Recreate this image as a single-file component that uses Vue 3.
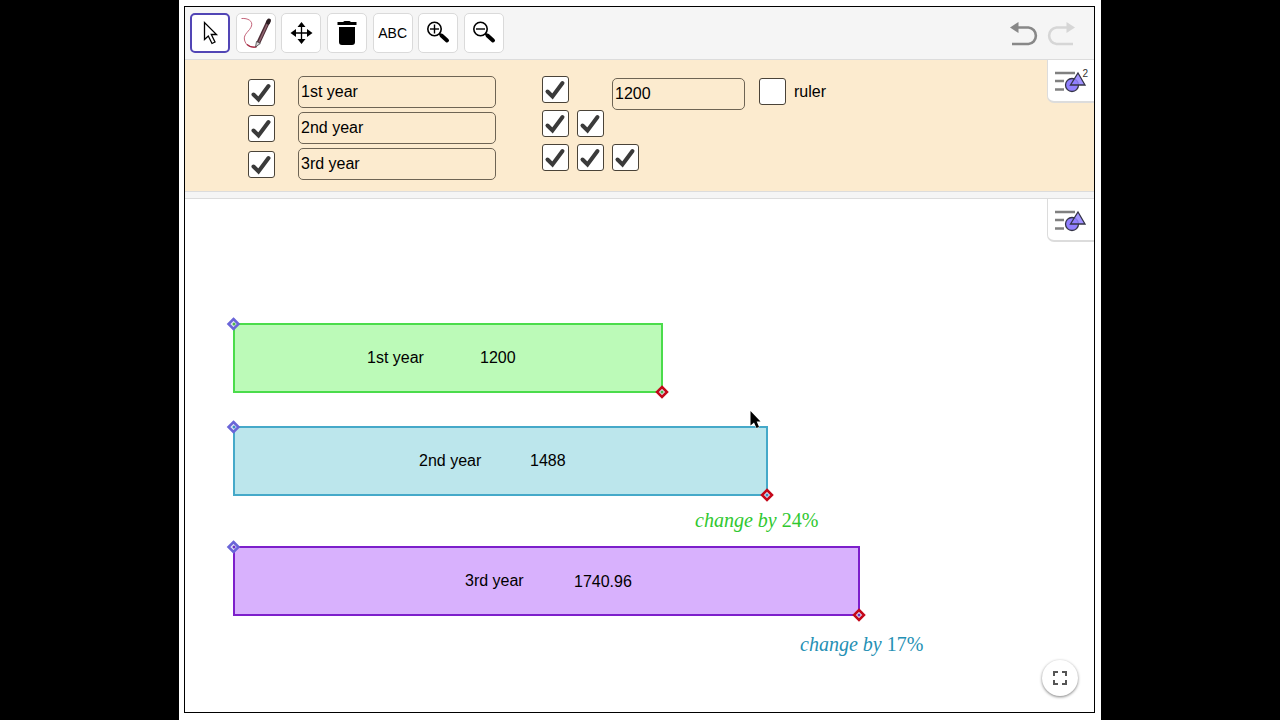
<script setup>
    import {ref, computed} from 'vue'

    const activeTool = ref('move')
    const tools = [
        {id: 'move', label: 'Move'},
        {id: 'pen', label: 'Pen'},
        {id: 'pan', label: 'Move view'},
        {id: 'delete', label: 'Delete'},
        {id: 'text', label: 'Text'},
        {id: 'zoomIn', label: 'Zoom in'},
        {id: 'zoomOut', label: 'Zoom out'}
    ]

    const years = ref([
        {name: '1st year', shown: true},
        {name: '2nd year', shown: true},
        {name: '3rd year', shown: true}
    ])

    const marks = ref([
        {row: 1, col: 1, on: true},
        {row: 2, col: 1, on: true},
        {row: 2, col: 2, on: true},
        {row: 3, col: 1, on: true},
        {row: 3, col: 2, on: true},
        {row: 3, col: 3, on: true}
    ])

    const amount = ref('1200')
    const ruler = ref(false)

    const bars = computed(() => [
        {kind: 'green', x: 49, y: 125, w: 428, h: 68, value: amount.value, nameX: 182, nameY: 164, valueX: 295, valueY: 164},
        {kind: 'blue', x: 49, y: 228, w: 533, h: 68, value: '1488', nameX: 234, nameY: 267, valueX: 345, valueY: 267},
        {kind: 'purple', x: 49, y: 348, w: 625, h: 68, value: '1740.96', nameX: 280, nameY: 387, valueX: 389, valueY: 388}
    ])

    const changes = [
        {kind: 'green', x: 510, y: 328, percent: '24%'},
        {kind: 'blue', x: 615, y: 452, percent: '17%'}
    ]
</script>

<template>
    <div class="screen">
        <svg class="defs" width="0" height="0" aria-hidden="true">
            <symbol id="check" viewBox="0 0 27 27">
                <path d="M5.500 15.500L10.500 20.500L20.500 7" fill="none" stroke="#3a3a3a" stroke-width="4" stroke-linecap="round" stroke-linejoin="miter"/>
            </symbol>
            <symbol id="style" viewBox="0 0 34 26">
                <path d="M1 5h20M1 13h9M1 21.500h9" stroke="#808080" stroke-width="2.400"/>
                <circle cx="18" cy="17" r="6.500" fill="#9180ff" stroke="#343447" stroke-width="1.300"/>
                <path d="M24 5L31 17H16.500Z" fill="#9180ff" fill-opacity=".85" stroke="#343447" stroke-width="1.300"/>
            </symbol>
        </svg>

        <div class="sheet">
            <main class="applet">
                <header class="toolbar">
                    <nav class="tools">
                        <button
                            v-for="tool in tools"
                            :key="tool.id"
                            type="button"
                            class="tool"
                            :class="{active: activeTool === tool.id}"
                            :aria-label="tool.label"
                            @click="activeTool = tool.id"
                        >
                            <span v-if="tool.id === 'text'">ABC</span>
                            <svg v-else width="32" height="32" viewBox="0 0 32 32" aria-hidden="true">
                                <path v-if="tool.id === 'move'" d="M10.500 5.500V22.500L14.300 19L18 26.500L21 25L17.300 17.500H22.500Z" fill="#fff" stroke="#000" stroke-width="1.300"/>
                                <g v-if="tool.id === 'pen'" fill="none">
                                    <path d="M1.500 1.500C8 1 13 4 11.500 9C10 14 3 17 4.500 23C6 29 11 31 16.500 30" stroke="#c4647a" stroke-width="1"/>
                                    <path d="M7 27.500Q12 31.500 17 29.500" stroke="#a3263e" stroke-width="1.300"/>
                                    <path d="M28.500 4L18.500 25.500" stroke="#4b2c35" stroke-width="4"/>
                                    <path d="M28 5.500L19 25" stroke="#916571" stroke-width="1.500"/>
                                    <path d="M29 3.500L28 5.500" stroke="#2b1d22" stroke-width="4" stroke-linecap="round"/>
                                    <path d="M16.500 24.500L15.500 30L20.300 26.500Z" fill="#dcd3d6" stroke="#444" stroke-width=".8"/>
                                </g>
                                <g v-if="tool.id === 'pan'">
                                    <path d="M16.500 8V24M8 16H25" stroke="#000" stroke-width="1.300"/>
                                    <path d="M16.500 5L20.500 10H12.500ZM16.500 27L20.500 22H12.500ZM5.500 16L11 12V20ZM27.500 16L22 12V20Z"/>
                                </g>
                                <path v-if="tool.id === 'delete'" d="M6.500 5H12L13.500 4H18.500L20 5H25.500V8H6.500ZM8 10H24V25Q24 28 21 28H11Q8 28 8 25Z"/>
                                <g v-if="tool.id === 'zoomIn' || tool.id === 'zoomOut'" fill="none" stroke="#000">
                                    <circle cx="12.500" cy="12" r="6.700" stroke-width="1.600"/>
                                    <path d="M8 12H17" stroke-width="1.400"/>
                                    <path v-if="tool.id === 'zoomIn'" d="M12.500 7.500V16.500" stroke-width="1.400"/>
                                    <path d="M17.300 16.500L20 19" stroke-width="2"/>
                                    <path d="M19.500 18.500L25 23.500" stroke-width="4" stroke-linecap="round"/>
                                </g>
                            </svg>
                        </button>
                    </nav>
                    <div class="history">
                        <button type="button" class="undo" aria-label="Undo">
                            <svg width="30" height="26" viewBox="0 0 30 26" aria-hidden="true">
                                <path d="M8 7.500H19.500A8.300 8.300 0 0 1 19.500 24H3" fill="none" stroke="currentColor" stroke-width="2.600"/>
                                <path d="M1 7.500L9.500 2V13Z" fill="currentColor"/>
                            </svg>
                        </button>
                        <button type="button" class="redo" aria-label="Redo">
                            <svg width="30" height="26" viewBox="0 0 30 26" aria-hidden="true">
                                <path d="M22 7.500H10.500A8.300 8.300 0 0 0 10.500 24H27" fill="none" stroke="currentColor" stroke-width="2.600"/>
                                <path d="M29 7.500L20.500 2V13Z" fill="currentColor"/>
                            </svg>
                        </button>
                    </div>
                </header>

                <section class="controls">
                    <div class="names">
                        <template v-for="(year, i) in years" :key="i">
                            <span class="box">
                                <input v-model="year.shown" type="checkbox" :aria-label="'Show bar ' + (i + 1)">
                                <svg v-if="year.shown" width="27" height="27" aria-hidden="true"><use href="#check"/></svg>
                            </span>
                            <input v-model="year.name" class="field" type="text" :aria-label="'Name of bar ' + (i + 1)">
                        </template>
                    </div>

                    <div class="marks">
                        <span v-for="(mark, i) in marks" :key="i" class="box" :class="['row' + mark.row, 'col' + mark.col]">
                            <input v-model="mark.on" type="checkbox" :aria-label="'Label ' + (i + 1)">
                            <svg v-if="mark.on" width="27" height="27" aria-hidden="true"><use href="#check"/></svg>
                        </span>
                        <input v-model="amount" class="field amount" type="text" aria-label="Amount">
                        <label class="ruler">
                            <span class="box">
                                <input v-model="ruler" type="checkbox">
                                <svg v-if="ruler" width="27" height="27" aria-hidden="true"><use href="#check"/></svg>
                            </span>
                            ruler
                        </label>
                    </div>

                    <button type="button" class="style-button" aria-label="Style bar of view 2">
                        <svg width="34" height="26" aria-hidden="true"><use href="#style"/></svg>
                        <span class="view-number">2</span>
                    </button>
                </section>

                <div class="divider"></div>

                <section class="canvas">
                    <svg class="drawing">
                        <g v-for="(bar, i) in bars" :key="bar.kind" :class="bar.kind">
                            <template v-if="years[i].shown">
                                <rect class="bar" :x="bar.x" :y="bar.y" :width="bar.w" :height="bar.h"/>
                                <text :x="bar.nameX" :y="bar.nameY">{{ years[i].name }}</text>
                                <text :x="bar.valueX" :y="bar.valueY">{{ bar.value }}</text>
                                <g :transform="`translate(${bar.x} ${bar.y})`">
                                    <path class="handle start" d="M-.5 -5L4.500 0L-.5 5L-5.500 0Z"/>
                                    <circle class="dot" cx="0" cy="0" r="1.500"/>
                                </g>
                                <g :transform="`translate(${bar.x + bar.w} ${bar.y + bar.h})`">
                                    <path class="handle end" d="M0 -5L5 0L0 5L-5 0Z"/>
                                    <circle class="dot" cx="0" cy="0" r="1.500"/>
                                </g>
                            </template>
                        </g>
                        <text v-for="change in changes" :key="change.kind" class="change" :class="change.kind" :x="change.x" :y="change.y">change by <tspan class="percent">{{ change.percent }}</tspan></text>
                        <path class="pointer" d="M565.500 212V226.500L569 223.500L571.500 229L574 228L571.700 222.500H575.500Z"/>
                    </svg>

                    <button type="button" class="style-button" aria-label="Style bar">
                        <svg width="34" height="26" aria-hidden="true"><use href="#style"/></svg>
                    </button>
                    <button type="button" class="fullscreen" aria-label="Full screen">
                        <svg width="16" height="16" viewBox="0 0 16 16" aria-hidden="true">
                            <path d="M2 6V2H6M10 2H14V6M14 10V14H10M6 14H2V10" fill="none" stroke="#555" stroke-width="2"/>
                        </svg>
                    </button>
                </section>
            </main>
        </div>
    </div>
</template>

<style>
    body{
        background: #000;
    }
</style>

<style scoped>
    .screen{
        display: flex;
        min-height: 100vh;
        box-sizing: border-box;
        padding: 0 179px;
        background: #000;
        color: #000;
        font-family: "Liberation Sans", Arial, sans-serif;
        font-size: 16px;
    }

    .defs{
        position: absolute;
    }

    .sheet{
        display: flex;
        flex: 1;
        min-width: 0;
        padding: 6px 6px 7px 5px;
        background: #fff;
    }

    .applet{
        display: flex;
        flex-direction: column;
        flex: 1;
        min-width: 0;
        border: 1px solid #000;
    }

    button{
        padding: 0;
        border: 0;
        background: none;
        color: inherit;
        font: inherit;
        cursor: pointer;
    }

    .toolbar{
        display: flex;
        align-items: center;
        justify-content: space-between;
        padding: 6px 18px 6px 5px;
        border-bottom: 1px solid #dcdcdc;
        background: #f5f5f5;
    }

    .tools{
        display: flex;
        justify-content: space-between;
        width: 314px;
    }

    .tool{
        display: flex;
        align-items: center;
        justify-content: center;
        width: 40px;
        height: 40px;
        border: 1px solid #dadada;
        border-radius: 5px;
        background: #fff;
        font-size: 14px;
    }

    .tool.active{
        border: 2px solid #5145b5;
    }

    .history{
        display: flex;
        gap: 7px;
    }

    .history button{
        display: flex;
    }

    .undo{
        color: #888;
    }

    .redo{
        color: #d6d6d6;
    }

    .controls{
        position: relative;
        display: flex;
        gap: 46px;
        padding: 16px 0 11px 63px;
        background: #fcebcf;
    }

    .names{
        display: grid;
        grid-template-columns: 27px 198px;
        grid-auto-rows: 32px;
        align-items: center;
        gap: 4px 23px;
    }

    .marks{
        display: grid;
        grid-template-columns: 27px 27px 133px auto;
        grid-template-rows: 27px 27px 27px;
        gap: 7px 8px;
    }

    .box{
        display: grid;
        width: 27px;
        height: 27px;
    }

    .box input, .box svg{
        grid-area: 1 / 1;
    }

    .box input{
        appearance: none;
        width: 27px;
        height: 27px;
        margin: 0;
        border: 1px solid #4a4338;
        border-radius: 3px;
        background: #fff;
    }

    .box svg{
        position: relative;
        pointer-events: none;
    }

    .row1{
        grid-row: 1;
    }

    .row2{
        grid-row: 2;
    }

    .row3{
        grid-row: 3;
    }

    .col1{
        grid-column: 1;
    }

    .col2{
        grid-column: 2;
    }

    .col3{
        grid-column: 3;
    }

    .field{
        box-sizing: border-box;
        width: 100%;
        height: 32px;
        padding: 0 2px;
        border: 1px solid #6e6454;
        border-radius: 5px;
        background: transparent;
        color: inherit;
        font: inherit;
    }

    .amount{
        grid-row: 1;
        grid-column: 3;
        margin-top: 2px;
    }

    .ruler{
        display: flex;
        align-items: center;
        gap: 8px;
        grid-row: 1;
        grid-column: 4;
        margin: 2px 0 0 6px;
        height: 27px;
    }

    .divider{
        height: 6px;
        border-top: 1px solid #dcdcdc;
        border-bottom: 1px solid #dcdcdc;
        background: #f5f5f5;
    }

    .style-button{
        position: absolute;
        top: 0;
        right: 0;
        width: 47px;
        height: 43px;
        border: solid #dcdcdc;
        border-width: 0 0 2px 1px;
        border-radius: 0 0 0 7px;
        background: #fff;
    }

    .style-button svg{
        display: block;
        margin: 0 auto;
    }

    .view-number{
        position: absolute;
        top: 9px;
        right: 6px;
        color: #333;
        font-size: 10px;
        line-height: 10px;
    }

    .canvas{
        position: relative;
        display: flex;
        flex: 1;
        min-height: 480px;
        background: #fff;
    }

    .drawing{
        flex: 1;
        min-width: 0;
    }

    .bar{
        stroke-width: 2;
    }

    .green .bar{
        fill: #bcfab8;
        stroke: #4bdc4b;
    }

    .blue .bar{
        fill: #bce6ec;
        stroke: #45a9c9;
    }

    .purple .bar{
        fill: #d8b1fd;
        stroke: #7d1fcb;
    }

    .green .dot{
        fill: #4bb84b;
    }

    .blue .dot{
        fill: #3c8fc4;
    }

    .purple .dot{
        fill: #6a30c8;
    }

    .handle{
        fill: #e4e6f6;
        stroke-width: 2.5;
    }

    .start{
        stroke: #6a65d8;
    }

    .end{
        stroke: #c4081a;
    }

    .change{
        font-family: "Liberation Serif", "Times New Roman", serif;
        font-size: 20px;
        font-style: italic;
    }

    .change.green{
        fill: #2fc82f;
    }

    .change.blue{
        fill: #2490b4;
    }

    .percent{
        font-style: normal;
    }

    .pointer{
        fill: #000;
        stroke: #fff;
        stroke-width: 1;
        paint-order: stroke;
    }

    .fullscreen{
        position: absolute;
        right: 16px;
        bottom: 16px;
        display: flex;
        align-items: center;
        justify-content: center;
        width: 36px;
        height: 36px;
        border-radius: 50%;
        background: #fff;
        box-shadow: 0 1px 3px rgba(0, 0, 0, .5);
    }
</style>
